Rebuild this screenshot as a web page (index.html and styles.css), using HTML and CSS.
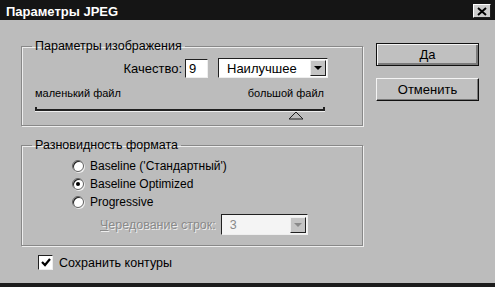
FILE: index.html
```html
<!DOCTYPE html>
<html lang="ru">
<head>
    <meta charset="UTF-8">
    <title>Параметры JPEG</title>
    <link rel="stylesheet" href="styles.css">
</head>
<body>

    <div class="window">
        <div class="titlebar">
            <span class="title">Параметры JPEG</span>
            <span class="closeBtn">
                <svg width="10" height="9" viewBox="0 0 10 9">
                    <path d="M1 1 L9 8 M9 1 L1 8" stroke="#000" stroke-width="2" fill="none"/>
                </svg>
            </span>
        </div>

        <div class="content">
            <div class="mainColumn">

                <fieldset class="group groupImage">
                    <legend>Параметры изображения</legend>
                    <div class="qualityRow">
                        <span class="qualityLabel">Качество:</span>
                        <span class="textBox">9</span>
                        <span class="selectBox">
                            <span class="selectText">Наилучшее</span>
                            <span class="selectArrow"><span class="arrow"></span></span>
                        </span>
                    </div>
                    <div class="sizeRow">
                        <span>маленький файл</span>
                        <span>большой файл</span>
                    </div>
                    <div class="slider">
                        <div class="track"></div>
                        <svg class="thumb" width="16" height="9" viewBox="0 0 16 9">
                            <path d="M8 1 L15 8 L1 8 Z" fill="#bcbcbc" stroke="#202020" stroke-width="1"/>
                        </svg>
                    </div>
                </fieldset>

                <fieldset class="group groupFormat">
                    <legend>Разновидность формата</legend>
                    <div class="radioList">
                        <div class="radioRow"><span class="radio"></span>Baseline ('Стандартный')</div>
                        <div class="radioRow"><span class="radio checked"></span>Baseline Optimized</div>
                        <div class="radioRow"><span class="radio"></span>Progressive</div>
                    </div>
                    <div class="scanRow">
                        <span class="disabledText"><u>Ч</u>ередование строк:</span>
                        <span class="selectBox selectDisabled">
                            <span class="selectText">3</span>
                            <span class="selectArrow"><span class="arrow"></span></span>
                        </span>
                    </div>
                </fieldset>

                <div class="checkRow">
                    <span class="checkbox">
                        <svg width="10" height="9" viewBox="0 0 10 9">
                            <path d="M1 4 L4 7 L9 1" stroke="#000" stroke-width="2.2" fill="none"/>
                        </svg>
                    </span>
                    Сохранить контуры
                </div>

            </div>

            <div class="buttonColumn">
                <button class="btn btnDefault">Да</button>
                <button class="btn">Отменить</button>
            </div>
        </div>
    </div>

</body>
</html>
```

FILE: styles.css
```css
body {
    margin: 0;
    padding: 0;
    font-family: "Liberation Sans", Arial, sans-serif;
    color: #000;
}

.window {
    width: 495px;
    height: 287px;
    box-sizing: border-box;
    background-color: #bcbcbc;
    border-bottom: 4px solid #1c1c1c;
    overflow: hidden;
}

.titlebar {
    height: 20px;
    background-color: #151515;
    display: flex;
    align-items: center;
    justify-content: space-between;
    padding: 0 4px 0 6px;
}

.title {
    color: #fff;
    font-weight: bold;
    font-size: 13px;
    padding-top: 2px;
}

.closeBtn {
    width: 18px;
    height: 14px;
    box-sizing: border-box;
    background-color: #cdcdcd;
    border-top: 1px solid #fff;
    border-left: 1px solid #fff;
    border-right: 1px solid #202020;
    border-bottom: 1px solid #202020;
    display: flex;
    align-items: center;
    justify-content: center;
    margin-top: 2px;
}

.content {
    display: flex;
    padding-left: 21px;
}

.mainColumn {
    width: 342px;
}

/* рамки групп */
.group {
    margin: 0;
    padding: 0;
    border: 1px solid #888;
    box-shadow: 1px 1px 0 #eee, inset 1px 1px 0 #eee;
    min-width: 0;
}

.group legend {
    margin-left: 10px;
    padding: 0 3px;
    font-size: 12.5px;
    line-height: 15px;
}

.groupImage {
    margin-top: 19px;
    padding-bottom: 4px;
}

.qualityRow {
    display: flex;
    justify-content: flex-end;
    align-items: center;
    margin-top: 4px;
    padding-right: 34px;
    font-size: 13px;
}

.qualityLabel {
    margin-right: 3px;
}

.textBox {
    width: 23px;
    height: 19px;
    box-sizing: border-box;
    background-color: #fff;
    border-top: 1px solid #202020;
    border-left: 1px solid #202020;
    border-right: 1px solid #eee;
    border-bottom: 1px solid #eee;
    padding-left: 3px;
    line-height: 17px;
    margin-right: 10px;
}

.selectBox {
    width: 110px;
    height: 20px;
    box-sizing: border-box;
    background-color: #fff;
    border-top: 1px solid #202020;
    border-left: 1px solid #202020;
    border-right: 1px solid #eee;
    border-bottom: 1px solid #eee;
    display: flex;
    align-items: center;
    justify-content: space-between;
}

.selectText {
    padding-left: 8px;
}

.selectArrow {
    width: 16px;
    height: 16px;
    margin-right: 1px;
    box-sizing: border-box;
    background-color: #c4c4c4;
    border-top: 1px solid #eee;
    border-left: 1px solid #eee;
    border-right: 1px solid #202020;
    border-bottom: 1px solid #202020;
    display: flex;
    align-items: center;
    justify-content: center;
}

.arrow {
    width: 0;
    height: 0;
    border-left: 4px solid transparent;
    border-right: 4px solid transparent;
    border-top: 4px solid #000;
}

.sizeRow {
    display: flex;
    justify-content: space-between;
    margin: 9px 38px 0 13px;
    font-size: 11px;
    line-height: 13px;
}

.slider {
    position: relative;
    margin: 9px 0 0 13px;
    width: 290px;
    height: 12px;
}

.track {
    position: relative;
    height: 2px;
    background-color: #202020;
    border-bottom: 1px solid #eee;
}

.track::before,
.track::after {
    content: "";
    position: absolute;
    top: -2px;
    width: 2px;
    height: 4px;
    background-color: #202020;
}

.track::before {
    left: 0;
}

.track::after {
    right: 0;
}

.thumb {
    position: absolute;
    left: 253px;
    top: 2px;
}

.groupFormat {
    margin-top: 12px;
    padding-bottom: 10px;
}

.radioList {
    margin: 4px 0 0 50px;
    font-size: 12px;
}

.radioRow {
    display: flex;
    align-items: center;
    height: 18px;
}

.radio {
    width: 12px;
    height: 12px;
    box-sizing: border-box;
    border-radius: 50%;
    background-color: #fff;
    border: 1px solid #606060;
    box-shadow: inset 1px 1px 0 #202020, 1px 1px 0 #eee;
    margin-right: 6px;
    position: relative;
}

.radio.checked::after {
    content: "";
    position: absolute;
    left: 3px;
    top: 3px;
    width: 4px;
    height: 4px;
    border-radius: 50%;
    background-color: #000;
}

.scanRow {
    display: flex;
    align-items: center;
    margin: 3px 0 0 78px;
    font-size: 12.5px;
}

.disabledText {
    color: #8a8a8a;
    text-shadow: 1px 1px 0 #eee;
    margin-right: 5px;
}

.selectDisabled {
    width: 87px;
    height: 21px;
    background-color: #f4f4f4;
    color: #8a8a8a;
}

.selectDisabled .arrow {
    border-top-color: #8a8a8a;
}

.checkRow {
    display: flex;
    align-items: center;
    margin: 9px 0 0 17px;
    font-size: 12.5px;
}

.checkbox {
    width: 15px;
    height: 15px;
    box-sizing: border-box;
    background-color: #fff;
    border-top: 1px solid #202020;
    border-left: 1px solid #202020;
    border-right: 1px solid #eee;
    border-bottom: 1px solid #eee;
    display: flex;
    align-items: center;
    justify-content: center;
    margin-right: 6px;
}

.buttonColumn {
    display: flex;
    flex-direction: column;
    margin: 23px 0 0 13px;
    gap: 12px;
}

.btn {
    width: 103px;
    height: 23px;
    box-sizing: border-box;
    background-color: #c0c0c0;
    font-family: "Liberation Sans", Arial, sans-serif;
    font-size: 13px;
    color: #000;
    border-top: 1px solid #f4f4f4;
    border-left: 1px solid #f4f4f4;
    border-right: 1px solid #101010;
    border-bottom: 1px solid #101010;
    box-shadow: inset -1px -1px 0 #7a7a7a;
    padding: 0;
}

.btnDefault {
    border: 1px solid #101010;
    box-shadow: inset 1px 1px 0 #f4f4f4, inset -2px -2px 0 #7a7a7a;
}
```
